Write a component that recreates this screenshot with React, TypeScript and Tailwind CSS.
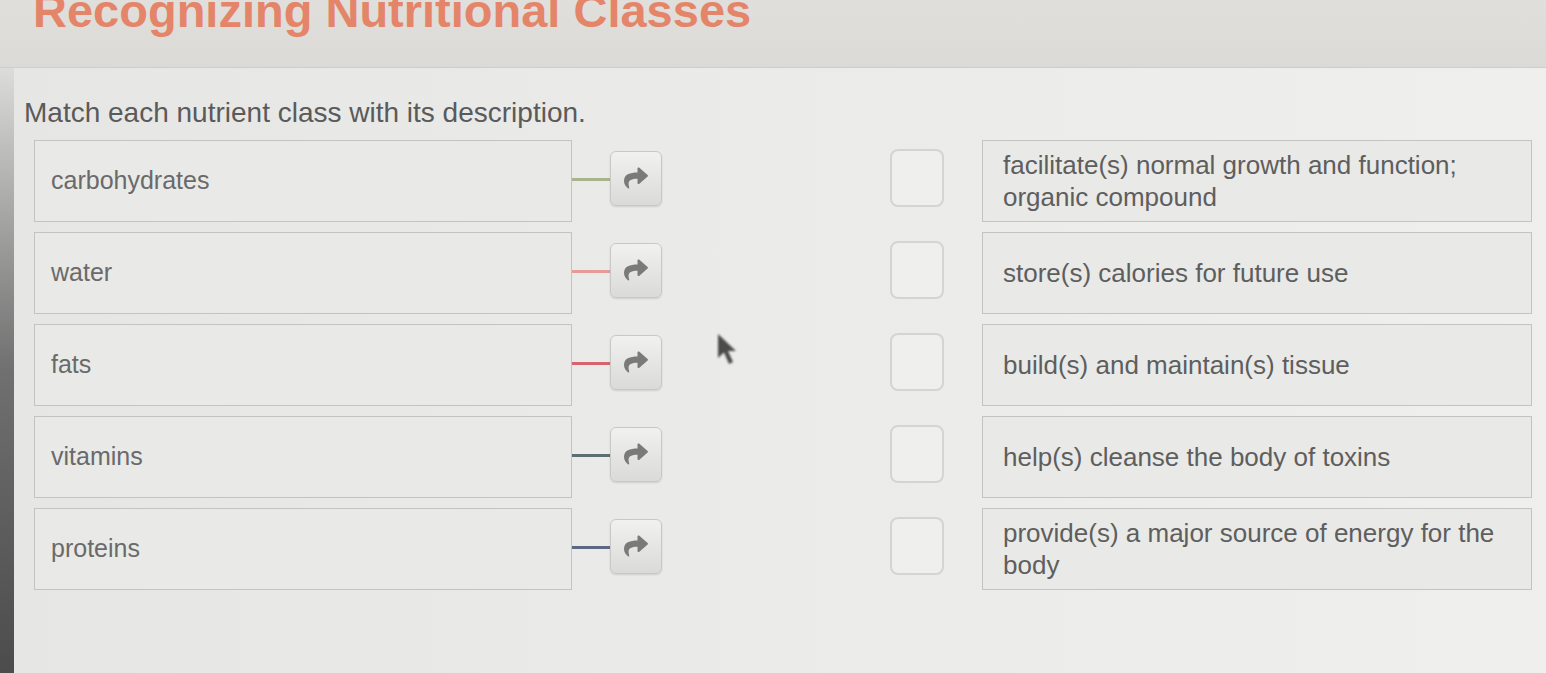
import React from 'react';
import { FaShare } from 'react-icons/fa';

// Matching exercise: nutrient classes on the left, descriptions on the right.
type Pair = {
  label: string;
  line: string;
  desc: string;
};

const PAIRS: Pair[] = [
  { label: 'carbohydrates', line: '#a7b48e', desc: 'facilitate(s) normal growth and function; organic compound' },
  { label: 'water', line: '#e69b98', desc: 'store(s) calories for future use' },
  { label: 'fats', line: '#d5646f', desc: 'build(s) and maintain(s) tissue' },
  { label: 'vitamins', line: '#5c6d73', desc: 'help(s) cleanse the body of toxins' },
  { label: 'proteins', line: '#5d6983', desc: 'provide(s) a major source of energy for the body' },
];

const FONT = { fontFamily: '"Liberation Sans", Arial, sans-serif' };

function Cursor() {
  return (
    <svg width="22" height="34" viewBox="0 0 22 34" className="blur-[1px]">
      <path d="M1 1 L1 25 L7 19.5 L12 31 L16 29 L11 18 L19 18 Z" fill="#4b4b4b" />
    </svg>
  );
}

function Row({ pair }: { pair: Pair }) {
  return (
    <div className="ml-[10px] grid h-[82px] grid-cols-[538px_38px_52px_1fr_54px_38px_550px] items-center">
      {/* term box */}
      <div className="flex h-full items-center border border-[#c3c3c1] bg-[#e9e9e7] pl-[16px] text-[25px] text-[#6a6a6a]">
        {pair.label}
      </div>

      {/* colored connector */}
      <div className="-mt-[4px] h-[3px] w-full" style={{ backgroundColor: pair.line }} />

      {/* drag handle */}
      <button
        type="button"
        className="-mt-[6px] flex h-[55px] w-[52px] items-center justify-center rounded-md border border-[#c8c8c6] bg-gradient-to-b from-[#f1f1ef] to-[#dadad8] shadow-[0_1px_2px_rgba(0,0,0,0.12)]"
      >
        <FaShare size={24} color="#7a7a7a" />
      </button>

      <div />

      {/* drop target */}
      <div className="-mt-[6px] h-[58px] w-[54px] rounded-lg border-2 border-[#d4d4d2] bg-[#efefed]" />

      <div />

      {/* description box */}
      <div className="flex h-full items-center border border-[#c3c3c1] bg-[#e9e9e7] pl-[20px] pr-[16px] text-[26px] leading-[32px] text-[#5e5e5e]">
        <span>{pair.desc}</span>
      </div>
    </div>
  );
}

export default function App() {
  return (
    <div className="h-[673px] w-[1546px] overflow-hidden bg-[#e9e9e7]" style={FONT}>
      <header className="h-[68px] overflow-hidden border-b border-[#cfcdca] bg-gradient-to-b from-[#e1dfdc] to-[#dcdad7] pl-[33px] shadow-[0_3px_6px_rgba(0,0,0,0.08)]">
        <h1 className="-mt-[13px] text-[47px] font-bold leading-none text-[#e4856a]">
          Recognizing Nutritional Classes
        </h1>
      </header>

      <div className="flex h-[605px]">
        {/* monitor bezel on the left edge */}
        <div className="w-[14px] bg-gradient-to-b from-[#dcdcda] via-[#707070] to-[#4c4c4c]" />

        <main className="relative flex-1 bg-gradient-to-r from-[#e6e6e4] via-[#ebebe9] to-[#efefed] pl-[10px] pr-[14px] pt-[31px]">
          <p className="text-[28px] leading-none text-[#5a5a5a]">Match each nutrient class with its description.</p>

          <div className="mt-[13px] flex flex-col gap-[10px]">
            {PAIRS.map((p) => (
              <Row key={p.label} pair={p} />
            ))}
          </div>

          <div className="absolute left-[703px] top-[265px]">
            <Cursor />
          </div>
        </main>
      </div>
    </div>
  );
}
